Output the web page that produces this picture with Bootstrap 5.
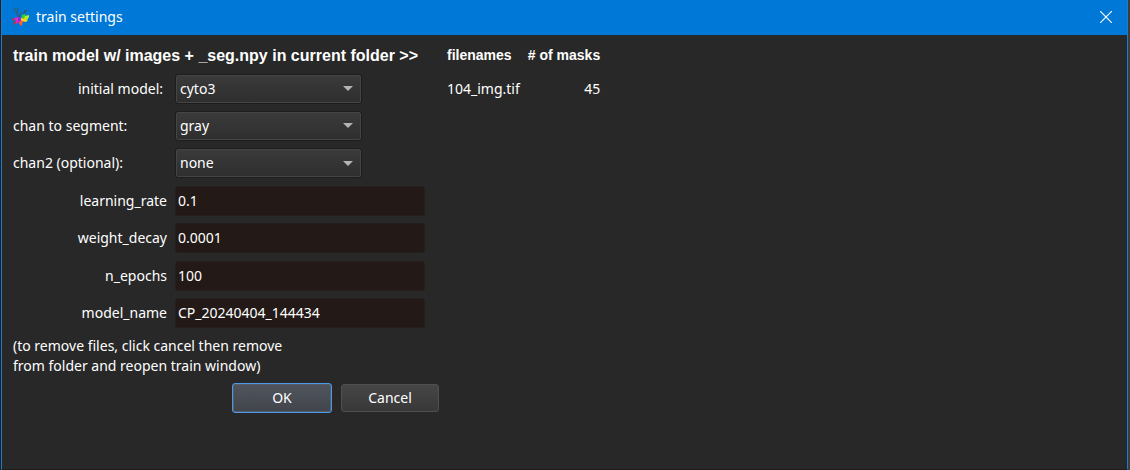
<!DOCTYPE html>
<html lang="en">
<head>
<meta charset="utf-8">
<meta name="viewport" content="width=device-width, initial-scale=1">
<title>train settings</title>
<link href="https://cdn.jsdelivr.net/npm/bootstrap@5.3.0/dist/css/bootstrap.min.css" rel="stylesheet">
<style>
body { background: #282828; color: #fff; font-family: "Noto Sans", "Open Sans", sans-serif; font-size: 14px; line-height: 20px; }
.dialog-shell { min-height: 100vh; border-left: 1px solid #202020; border-right: 2px solid #3c3c3c; }
.dialog-frame { border: 1px solid #1e7acb; border-top: 0; border-bottom-color: #1c1c1c; }
.title-bar { background: #0078d7; height: 35px; padding: 0 15px 2px 9px; gap: 6px; }
.close-btn { color: #fff; line-height: 0; }
.dialog-body { padding: 10px 11px; column-gap: 22px; }
.heading-text, .files-table th { font-family: "Liberation Sans", Arial, sans-serif; font-weight: 700; }
.heading-text { font-size: 16px; line-height: 20px; margin: 0; padding: 1px 0 4px; }
.form-row { display: grid; grid-template-columns: 154px 1fr; column-gap: 8px; align-items: center; min-height: 38px; }
.select-row { min-height: 37px; }
.form-area { width: 412px; }
.form-area .form-select { width: 187px; height: 30px; padding: 0 24px 0 4px; font-size: 14px; line-height: 20px; color: #fff;
  background: url("data:image/svg+xml,%3Csvg xmlns='http://www.w3.org/2000/svg' viewBox='0 0 10 5'%3E%3Cpath fill='%23b4b4b4' d='M0 0h10L5 5z'/%3E%3C/svg%3E") no-repeat right 8px center / 10px 5px, linear-gradient(#3b3b3b, #2e2e2e);
  border: 1px solid #1d1d1d; border-radius: 3px; box-shadow: inset 0 0 0 1px #454545; }
.form-area .form-control { height: 30px; padding: 0 2px 1px; font-size: 14px; line-height: 20px; color: #fff; background: #231a17; border: 1px solid #241e1c; border-radius: 3px; }
.label-inset { padding-right: 4px; }
.dialog-btn { width: 98px; height: 28px; padding: 0; font-size: 14px; line-height: 20px; color: #fff; border: 1px solid #505050; border-radius: 3px; background: linear-gradient(#464646, #383838); }
.dialog-btn:hover { color: #fff; border-color: #777; }
.ok-btn { width: 100px; height: 30px; border-color: #4a9ae9; background: linear-gradient(#50555d, #41444b); box-shadow: inset 0 0 0 1px #565d68; }
.ok-btn:hover { border-color: #4a9ae9; }
.note-text { margin: 4px 0 0; }
.button-row { gap: 9px; margin: 7px -14px 0 0; }
.files-table { white-space: nowrap; }
.files-table th { font-size: 14px; line-height: 20px; padding: 0 0 5px; }
.files-table td { padding: 9px 0; }
.files-table th + th, .files-table td + td { padding-left: 8px; text-align: right; }
</style>
</head>
<body>
<div class="dialog-shell d-flex">
  <main class="dialog-frame flex-grow-1">
    <header class="title-bar d-flex align-items-center">
      <svg width="19" height="20" viewBox="0 0 19 20" aria-hidden="true">
        <g fill="none" stroke="#3c5358" stroke-width="1"><path d="M4 1L3 3l3 3 2 5M7 1l-1 5M10 5l-2 6M16 3l-3 3-1 5M14 3l-1 3"/></g>
        <path fill="#35cd35" d="M11 8l3-1 1 3-1 3h-4z"/>
        <path fill="#b7ec25" d="M14 9l4-1v2l-2 3-3-1z"/>
        <path fill="#ffd51b" d="M10 11l4 1 3 1-2 2-5-1z"/>
        <path fill="#ff641d" d="M9 13l3 1-1 4-1 1-2-3z"/>
        <path fill="#ed24cd" d="M3 11l6-1 1 4-3 2-3 1 1-3z"/>
        <path fill="#7b2be8" d="M7 11l3-1-1 4-2 1z"/>
        <path fill="#a83e45" d="M1 11l3 1-1 2-2-1zM4 14l2 1-3 3-1-1z"/>
      </svg>
      <span>train settings</span>
      <button type="button" class="close-btn btn p-0 border-0 ms-auto" aria-label="Close">
        <svg width="12" height="12" viewBox="0 0 12 12" fill="none" stroke="currentColor" stroke-width="1.2"><path d="M0 0l12 12M12 0L0 12"/></svg>
      </button>
    </header>
    <div class="dialog-body d-flex flex-wrap align-items-start">
      <form class="form-area">
        <h1 class="heading-text text-nowrap">train model w/ images + _seg.npy in current folder &gt;&gt;</h1>
        <div class="form-row select-row">
          <label class="text-end label-inset" for="model">initial model:</label>
          <select class="form-select" id="model"><option>cyto3</option></select>
        </div>
        <div class="form-row select-row">
          <label for="chan">chan to segment:</label>
          <select class="form-select" id="chan"><option>gray</option></select>
        </div>
        <div class="form-row">
          <label for="chan2">chan2 (optional):</label>
          <select class="form-select" id="chan2"><option>none</option></select>
        </div>
        <div class="form-row select-row">
          <label class="text-end" for="rate">learning_rate</label>
          <input class="form-control" type="text" id="rate" value="0.1">
        </div>
        <div class="form-row">
          <label class="text-end" for="decay">weight_decay</label>
          <input class="form-control" type="text" id="decay" value="0.0001">
        </div>
        <div class="form-row select-row">
          <label class="text-end" for="epochs">n_epochs</label>
          <input class="form-control" type="text" id="epochs" value="100">
        </div>
        <div class="form-row">
          <label class="text-end" for="name">model_name</label>
          <input class="form-control" type="text" id="name" value="CP_20240404_144434">
        </div>
        <p class="note-text">(to remove files, click cancel then remove<br>from folder and reopen train window)</p>
        <div class="button-row d-flex justify-content-end align-items-center">
          <button type="button" class="dialog-btn ok-btn btn">OK</button>
          <button type="button" class="dialog-btn btn">Cancel</button>
        </div>
      </form>
      <table class="files-table">
        <thead><tr><th scope="col">filenames</th><th scope="col"># of masks</th></tr></thead>
        <tbody><tr><td>104_img.tif</td><td>45</td></tr></tbody>
      </table>
    </div>
  </main>
</div>
<script src="https://cdn.jsdelivr.net/npm/bootstrap@5.3.0/dist/js/bootstrap.bundle.min.js"></script>
</body>
</html>
